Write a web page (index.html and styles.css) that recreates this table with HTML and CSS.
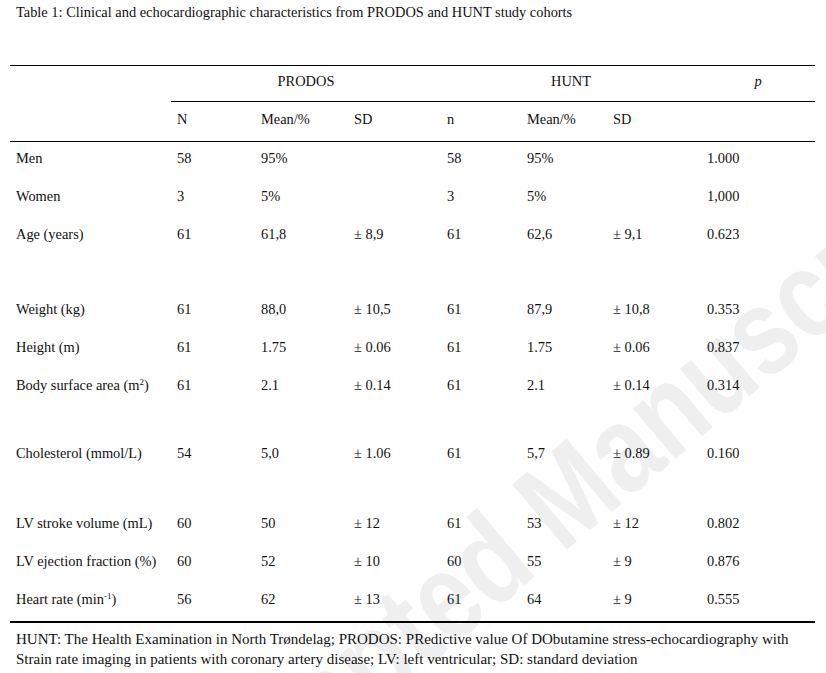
FILE: index.html
```html
<!DOCTYPE html>
<html>
<head>
<meta charset="utf-8">
<link rel="stylesheet" href="styles.css">
</head>
<body>
<div class="page">
  <div class="watermark" aria-hidden="true">Accepted Manuscript</div>
  <p class="title">Table 1: Clinical and echocardiographic characteristics from PRODOS and HUNT study cohorts</p>
  <table class="tbl">
    <colgroup>
      <col class="c-label"><col class="c-n"><col class="c-mean"><col class="c-sd">
      <col class="c-n2"><col class="c-mean2"><col class="c-sd2"><col class="c-p">
    </colgroup>
    <thead>
      <tr class="h1">
        <th></th>
        <th colspan="3" class="grp">PRODOS</th>
        <th colspan="3" class="grp">HUNT</th>
        <th class="pcol"><i>p</i></th>
      </tr>
      <tr class="h2">
        <th class="nol"></th>
        <th>N</th><th>Mean/%</th><th>SD</th>
        <th>n</th><th>Mean/%</th><th>SD</th>
        <th></th>
      </tr>
    </thead>
    <tbody>
      <tr><td>Men</td><td>58</td><td>95%</td><td></td><td>58</td><td>95%</td><td></td><td>1.000</td></tr>
      <tr><td>Women</td><td>3</td><td>5%</td><td></td><td>3</td><td>5%</td><td></td><td>1,000</td></tr>
      <tr><td>Age (years)</td><td>61</td><td>61,8</td><td>± 8,9</td><td>61</td><td>62,6</td><td>± 9,1</td><td>0.623</td></tr>
      <tr class="gap g1"><td colspan="8"></td></tr>
      <tr><td>Weight (kg)</td><td>61</td><td>88,0</td><td>± 10,5</td><td>61</td><td>87,9</td><td>± 10,8</td><td>0.353</td></tr>
      <tr><td>Height (m)</td><td>61</td><td>1.75</td><td>± 0.06</td><td>61</td><td>1.75</td><td>± 0.06</td><td>0.837</td></tr>
      <tr><td>Body surface area (m<sup>2</sup>)</td><td>61</td><td>2.1</td><td>± 0.14</td><td>61</td><td>2.1</td><td>± 0.14</td><td>0.314</td></tr>
      <tr class="gap g2"><td colspan="8"></td></tr>
      <tr><td>Cholesterol (mmol/L)</td><td>54</td><td>5,0</td><td>± 1.06</td><td>61</td><td>5,7</td><td>± 0.89</td><td>0.160</td></tr>
      <tr class="gap g3"><td colspan="8"></td></tr>
      <tr><td>LV stroke volume (mL)</td><td>60</td><td>50</td><td>± 12</td><td>61</td><td>53</td><td>± 12</td><td>0.802</td></tr>
      <tr><td>LV ejection fraction (%)</td><td>60</td><td>52</td><td>± 10</td><td>60</td><td>55</td><td>± 9</td><td>0.876</td></tr>
      <tr class="last"><td>Heart rate (min<sup>-1</sup>)</td><td>56</td><td>62</td><td>± 13</td><td>61</td><td>64</td><td>± 9</td><td>0.555</td></tr>
    </tbody>
  </table>
  <p class="note">HUNT: The Health Examination in North Trøndelag; PRODOS: PRedictive value Of DObutamine stress-echocardiography with Strain rate imaging in patients with coronary artery disease; LV: left ventricular; SD: standard deviation</p>
</div>
</body>
</html>
```

FILE: styles.css
```css
html, body {
  margin: 0;
  padding: 0;
  background: #ffffff;
}
.page {
  position: relative;
  width: 826px;
  height: 673px;
  overflow: hidden;
  font-family: "Liberation Serif", "Times New Roman", serif;
  color: #111111;
}
.watermark {
  position: absolute;
  left: 122px;
  top: 786px;
  font-family: "Liberation Sans", Arial, sans-serif;
  font-weight: bold;
  font-size: 124px;
  line-height: 1;
  white-space: nowrap;
  color: #efefef;
  transform: rotate(-40deg) scaleX(0.82);
  transform-origin: 0 0;
  z-index: 0;
}
.title {
  position: relative;
  z-index: 1;
  margin: 0;
  padding: 4px 0 0 16px;
  font-size: 14.4px;
  line-height: 16px;
}
.tbl {
  position: relative;
  z-index: 1;
  margin: 45px 0 0 10px;
  width: 805px;
  border-collapse: collapse;
  table-layout: fixed;
  font-size: 14.4px;
}
.c-label { width: 161px; }
.c-n { width: 84px; }
.c-mean { width: 93px; }
.c-sd { width: 93px; }
.c-n2 { width: 80px; }
.c-mean2 { width: 86px; }
.c-sd2 { width: 94px; }
.c-p { width: 114px; }
.tbl th, .tbl td {
  padding: 8px 0 0 6px;
  height: 30px;
  line-height: 16px;
  text-align: left;
  vertical-align: top;
  font-weight: normal;
  white-space: nowrap;
}
.tbl thead tr.h1 th {
  border-top: 1.5px solid #000;
  border-bottom: 1.5px solid #000;
  height: 28px;
  padding-top: 7px;
}
.tbl thead tr.h1 th:first-child {
  border-bottom: none;
}
.tbl thead tr.h1 th.grp {
  text-align: center;
  padding-left: 0;
}
.tbl thead tr.h1 th.pcol {
  text-align: center;
  padding-left: 0;
}
.tbl thead tr.h2 th {
  border-bottom: 1.5px solid #000;
  height: 30px;
  padding-top: 9px;
}
.tbl tr.gap td { padding: 0; }
.tbl tr.g1 td { height: 37px; }
.tbl tr.g2 td { height: 30px; }
.tbl tr.g3 td { height: 32px; }
.tbl tr.last td {
  border-bottom: 2px solid #000;
}
.tbl sup {
  font-size: 9px;
  line-height: 0;
  vertical-align: 5px;
}
.note {
  position: relative;
  z-index: 1;
  margin: 6px 0 0 0;
  padding: 0 0 0 16px;
  font-size: 15px;
  line-height: 20px;
  width: 800px;
}
```
